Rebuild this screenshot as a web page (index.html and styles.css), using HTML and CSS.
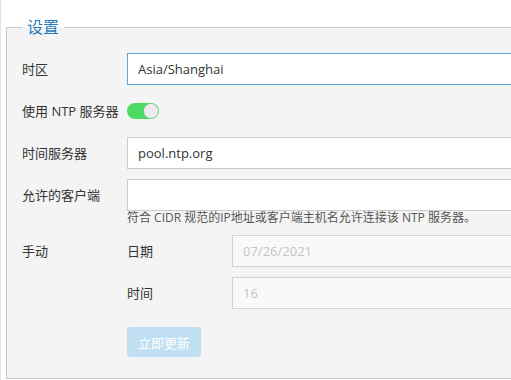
FILE: index.html
```html
<!DOCTYPE html>
<html lang="zh-CN">
<head>
    <meta charset="UTF-8">
    <meta name="viewport" content="width=device-width, initial-scale=1.0">
    <title>设置</title>
    <link rel="stylesheet" href="styles.css">
</head>
<body>
    <div class="page">
        <fieldset class="settings">
            <legend>设置</legend>

            <div class="row">
                <label for="timezone">时区</label>
                <input class="input input-focus" type="text" id="timezone" value="Asia/Shanghai">
            </div>

            <!-- NTP switch -->
            <div class="row">
                <label>使用 NTP 服务器</label>
                <div class="switch-cell">
                    <span class="switch on"><span class="knob"></span></span>
                </div>
            </div>

            <div class="row">
                <label for="ntpServer">时间服务器</label>
                <input class="input" type="text" id="ntpServer" value="pool.ntp.org">
            </div>

            <div class="row">
                <label for="clients">允许的客户端</label>
                <div>
                    <input class="input" type="text" id="clients">
                    <div class="help">符合 CIDR 规范的IP地址或客户端主机名允许连接该 NTP 服务器。</div>
                </div>
            </div>

            <!-- Manual date / time -->
            <div class="row">
                <label>手动</label>
                <div class="sub">
                    <div class="row">
                        <label for="date">日期</label>
                        <input class="input" type="text" id="date" value="07/26/2021" disabled>
                    </div>
                    <div class="row">
                        <label for="time">时间</label>
                        <input class="input" type="text" id="time" value="16" disabled>
                    </div>
                </div>
            </div>

            <div class="actions">
                <button type="button" class="btn" disabled>立即更新</button>
            </div>
        </fieldset>
    </div>
</body>
</html>
```

FILE: styles.css
```css
html, body {
    margin: 0;
    padding: 0;
    background: #fff;
    overflow: hidden;
}

body {
    font-family: "Open Sans", "Noto Sans CJK SC", sans-serif;
    font-size: 13px;
    color: #333;
}

.page {
    border-left: 1px solid #e3e3e3;
    min-height: 380px;
    box-sizing: border-box;
    padding-top: 16px;
}

.settings {
    width: 780px;
    margin: 0 0 0 5px;
    padding: 15px 15px 21px;
    border: 1px solid #c9c9c9;
    background-color: #f4f4f4;
    min-width: 0;
}

.settings legend {
    padding: 0 5px;
    font-size: 16px;
    line-height: 22px;
    color: #2b7bb9;
}

.row {
    display: grid;
    grid-template-columns: 105px 1fr;
    align-items: start;
    margin-bottom: 10px;
}

.row label {
    line-height: 32px;
    white-space: nowrap;
}

.sub .row:last-child {
    margin-bottom: 0;
}

.input {
    display: block;
    width: 100%;
    height: 32px;
    box-sizing: border-box;
    padding: 0 10px;
    border: 1px solid #ccc;
    background-color: #fff;
    font-family: inherit;
    font-size: 13px;
    color: #333;
    outline: none;
}

.input-focus {
    border-color: #5ba7dc;
}

.input:disabled {
    background-color: #f9f9f9;
    border-color: #d2d2d2;
    color: #c4c4c4;
}

.help {
    font-size: 12px;
    line-height: 14px;
    color: #555;
    white-space: nowrap;
}

/* Toggle switch */
.switch-cell {
    height: 32px;
    display: flex;
    align-items: center;
}

.switch {
    width: 32px;
    height: 16px;
    border-radius: 8px;
    background-color: #4cd964;
    display: flex;
    align-items: center;
    justify-content: flex-end;
    padding: 0 1px;
    box-sizing: border-box;
}

.knob {
    width: 14px;
    height: 14px;
    border-radius: 50%;
    background-color: #ececec;
    box-shadow: 0 0 0 0.5px #b9c7bb;
}

.actions {
    padding-left: 105px;
    margin-top: 18px;
}

.btn {
    width: 74px;
    height: 30px;
    border: none;
    border-radius: 3px;
    background-color: #c0dff2;
    color: #fff;
    font-family: inherit;
    font-size: 13px;
    padding: 0;
}
```
